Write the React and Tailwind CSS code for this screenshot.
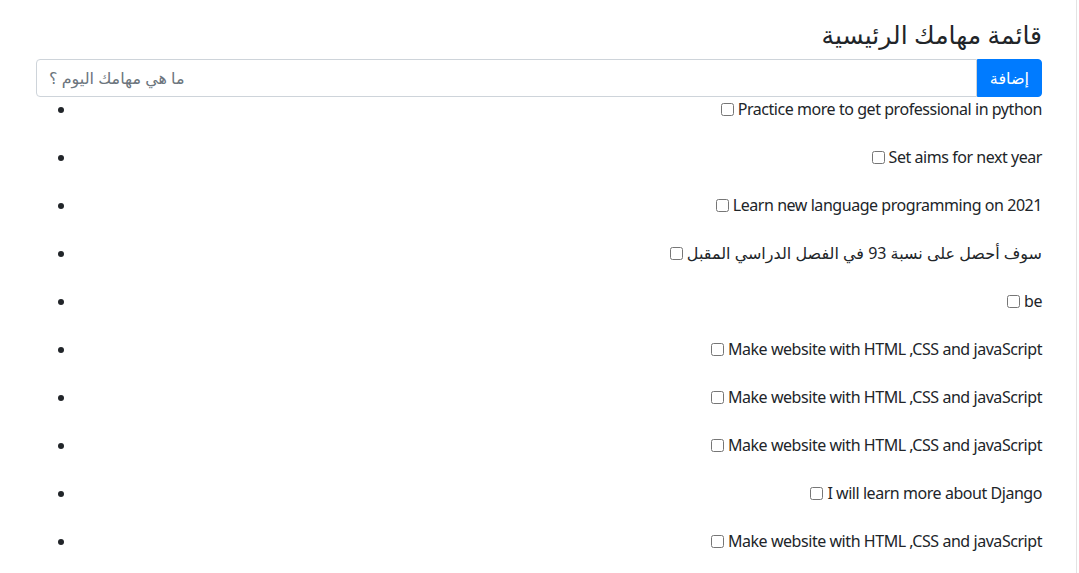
import { useState } from "react";

const initialTasks = [
  "Practice more to get professional in python",
  "Set aims for next year",
  "Learn new language programming on 2021",
  "سوف أحصل على نسبة 93 في الفصل الدراسي المقبل",
  "be",
  "Make website with HTML ,CSS and javaScript",
  "Make website with HTML ,CSS and javaScript",
  "Make website with HTML ,CSS and javaScript",
  "I will learn more about Django",
  "Make website with HTML ,CSS and javaScript",
];

const isArabic = (s) => /[\u0600-\u06FF]/.test(s);

export default function App() {
  const [tasks, setTasks] = useState(initialTasks);
  const [text, setText] = useState("");

  const addTask = () => {
    if (!text.trim()) return;
    setTasks([...tasks, text.trim()]);
    setText("");
  };

  return (
    <div
      className="flex h-[573px] overflow-hidden bg-white text-[#212529]"
      style={{ fontFamily: '"Noto Sans", "DejaVu Sans", sans-serif' }}
    >
      <main className="flex-1 pl-[36px] pr-[34px] pt-[19px]">
        <h3 dir="rtl" className="text-[25px] font-medium leading-[1.2] mb-[10px]">
          قائمة مهامك الرئيسية
        </h3>
        <div className="flex h-[38px]">
          <input
            dir="rtl"
            value={text}
            onChange={(e) => setText(e.target.value)}
            placeholder="ما هي مهامك اليوم ؟"
            className="flex-1 min-w-0 border border-[#ced4da] rounded-l-[4px] px-3 text-base text-left text-[#495057] placeholder:text-[#6c757d] outline-none"
          />
          <button
            onClick={addTask}
            className="bg-[#007bff] text-white text-base px-3 rounded-r-[4px] border border-[#007bff]"
          >
            إضافة
          </button>
        </div>
        <ul className="list-disc pl-10 text-base">
          {tasks.map((task, i) => (
            <li key={i} className="h-12 leading-6 text-right">
              <input
                type="checkbox"
                className="w-[13px] h-[13px] mt-[3px] mr-[4px] mb-[3px] ml-[4px] align-[-1px]"
              />
              <span className={isArabic(task) ? "" : "tracking-[-0.45px]"}>{task}</span>
            </li>
          ))}
        </ul>
      </main>
      <div className="w-[3px] border-l border-[#e3e3e3]"></div>
    </div>
  );
}
